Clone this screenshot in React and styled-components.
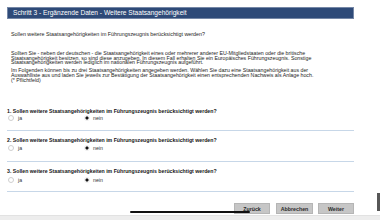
import React from 'react';
import styled, { createGlobalStyle } from 'styled-components';

const GlobalStyle = createGlobalStyle`
  html, body {
    margin: 0;
    padding: 0;
    background: #fff;
  }
  body {
    font-family: "Liberation Sans", Arial, sans-serif;
    color: #222;
  }
`;

const Page = styled.div`
  position: relative;
  width: 380px;
  height: 220px;
  overflow: hidden;
`;

const Main = styled.main`
  padding: 7px 26px 0 7px;
`;

const Header = styled.div`
  height: 12px;
  background: #2e4a78;
  border: 1px solid #7587a6;
  box-sizing: border-box;
  color: #fff;
  font-size: 6.6px;
  line-height: 10px;
  padding-left: 5px;
`;

const Text = styled.p`
  margin: ${(p) => p.$top || 0}px 0 0 4px;
  font-size: ${(p) => p.$size || 5.25}px;
  line-height: 4.6px;
  color: #1c1c1c;
`;

const Question = styled.section`
  margin-top: ${(p) => p.$mt || 0}px;
  padding: ${(p) => p.$pt}px 0 ${(p) => p.$pb}px 0;
  border-bottom: 1px solid #c7d7e8;
`;

const QTitle = styled.div`
  font-size: 5.2px;
  font-weight: bold;
  line-height: 6px;
  color: #151515;
`;

const Options = styled.div`
  display: flex;
  align-items: center;
  height: 7px;
  margin-top: ${(p) => p.$gap}px;
  padding-left: 1px;
`;

const Option = styled.label`
  display: flex;
  align-items: center;
  width: ${(p) => p.$w}px;
  font-size: 5.2px;
  color: #333;
`;

const Radio = styled.span`
  flex: none;
  width: 6px;
  height: 6px;
  border-radius: 50%;
  box-sizing: border-box;
  margin-right: ${(p) => (p.$checked ? 3 : 4)}px;
  border: 0.6px solid ${(p) => (p.$checked ? '#ececec' : '#cfcfcf')};
  background: ${(p) =>
    p.$checked ? 'radial-gradient(circle, #111 0 1.4px, #fff 1.8px)' : '#fff'};
`;

const Buttons = styled.div`
  display: flex;
  justify-content: flex-end;
  margin-top: 11px;
`;

const Button = styled.button`
  width: ${(p) => p.$w}px;
  height: 11px;
  margin-left: ${(p) => p.$gap || 0}px;
  padding: 0;
  background: #c6c6c6;
  border: 1px solid #b5b5b5;
  font-family: "Liberation Sans", Arial, sans-serif;
  font-size: 5.3px;
  font-weight: bold;
  color: #2a2a2a;
`;

const HomeBar = styled.div`
  position: absolute;
  left: 130px;
  top: 211px;
  width: 120px;
  height: 2px;
  background: #111;
  border-radius: 1px;
`;

const SideTab = styled.div`
  position: absolute;
  right: 0;
  top: 193px;
  width: 3px;
  height: 18px;
  background: #575757;
`;

const BottomStrip = styled.div`
  position: absolute;
  left: 0;
  right: 0;
  bottom: 0;
  height: 4px;
  background: #ededed;
  border-top: 1px solid #e2e2e2;
`;

const questions = [
  { n: 1, mt: 26, pt: 0, gap: 0, pb: 8.5 },
  { n: 2, mt: 0, pt: 6, gap: 2, pb: 9 },
  { n: 3, mt: 0, pt: 6, gap: 2.5, pb: 8 },
];

export default function App() {
  return (
    <Page>
      <GlobalStyle />
      <Main>
        <Header>Schritt 3 - Ergänzende Daten - Weitere Staatsangehörigkeit</Header>
        <Text $top={13} $size={5.35}>
          Sollen weitere Staatsangehörigkeiten im Führungszeugnis berücksichtigt werden?
        </Text>
        <Text $top={14.6}>
          Sollten Sie - neben der deutschen - die Staatsangehörigkeit eines oder mehrerer anderer EU-Mitgliedstaaten oder die britische
          <br />
          Staatsangehörigkeit besitzen, so sind diese anzugeben. In diesem Fall erhalten Sie ein Europäisches Führungszeugnis. Sonstige
          <br />
          Staatsangehörigkeiten werden lediglich im nationalen Führungszeugnis aufgeführt.
        </Text>
        <Text $top={3.5}>
          Im Folgenden können bis zu drei Staatsangehörigkeiten angegeben werden. Wählen Sie dazu eine Staatsangehörigkeit aus der
          <br />
          Auswahlliste aus und laden Sie jeweils zur Bestätigung der Staatsangehörigkeit einen entsprechenden Nachweis als Anlage hoch.
          <br />
          (* Pflichtfeld)
        </Text>
        {questions.map((q) => (
          <Question key={q.n} $mt={q.mt} $pt={q.pt} $pb={q.pb}>
            <QTitle>{q.n}. Sollen weitere Staatsangehörigkeiten im Führungszeugnis berücksichtigt werden?</QTitle>
            <Options $gap={q.gap}>
              <Option $w={76}>
                <Radio />
                ja
              </Option>
              <Option $w={60}>
                <Radio $checked />
                nein
              </Option>
            </Options>
          </Question>
        ))}
        <Buttons>
          <Button $w={36}>Zurück</Button>
          <Button $w={37} $gap={6}>Abbrechen</Button>
          <Button $w={36} $gap={5}>Weiter</Button>
        </Buttons>
      </Main>
      <HomeBar />
      <SideTab />
      <BottomStrip />
    </Page>
  );
}
